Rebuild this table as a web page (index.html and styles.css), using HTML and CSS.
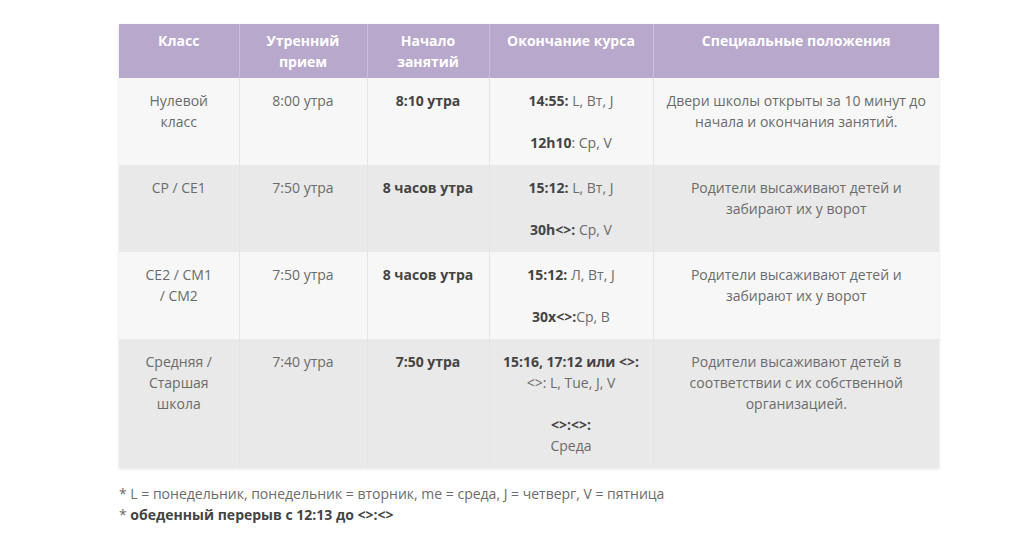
FILE: index.html
```html
<!DOCTYPE html>
<html lang="ru">
<head>
<meta charset="utf-8">
<title>Расписание</title>
<link rel="stylesheet" href="styles.css">
</head>
<body>
<div class="wrap">
  <table class="schedule">
    <colgroup>
      <col class="c1"><col class="c2"><col class="c3"><col class="c4"><col class="c5">
    </colgroup>
    <thead>
      <tr>
        <th>Класс</th>
        <th>Утренний прием</th>
        <th>Начало занятий</th>
        <th>Окончание курса</th>
        <th>Специальные положения</th>
      </tr>
    </thead>
    <tbody>
      <tr>
        <td class="cls">Нулевой класс</td>
        <td>8:00 утра</td>
        <td><b>8:10 утра</b></td>
        <td><b>14:55:</b> L, Вт, J<br><br><b>12h10</b>: Ср, V</td>
        <td>Двери школы открыты за 10 минут до начала и окончания занятий.</td>
      </tr>
      <tr>
        <td class="cls">CP / CE1</td>
        <td>7:50 утра</td>
        <td><b>8 часов утра</b></td>
        <td><b>15:12:</b> L, Вт, J<br><br><b>30h&lt;&gt;:</b> Ср, V</td>
        <td>Родители высаживают детей и забирают их у ворот</td>
      </tr>
      <tr>
        <td class="cls">CE2 / CM1<br>/ CM2</td>
        <td>7:50 утра</td>
        <td><b>8 часов утра</b></td>
        <td><b>15:12:</b> Л, Вт, J<br><br><b>30x&lt;&gt;:</b>Ср, В</td>
        <td>Родители высаживают детей и забирают их у ворот</td>
      </tr>
      <tr>
        <td class="cls">Средняя /<br>Старшая<br>школа</td>
        <td>7:40 утра</td>
        <td><b>7:50 утра</b></td>
        <td><b>15:16, 17:12 или &lt;&gt;:</b><br>&lt;&gt;: L, Tue, J, V<br><br><b>&lt;&gt;:&lt;&gt;:</b><br>Среда</td>
        <td>Родители высаживают детей в соответствии с их собственной организацией.</td>
      </tr>
    </tbody>
  </table>
  <p class="note">* L = понедельник, понедельник = вторник, me = среда, J = четверг, V = пятница</p>
  <p class="note">* <b>обеденный перерыв с 12:13 до &lt;&gt;:&lt;&gt;</b></p>
</div>
</body>
</html>
```

FILE: styles.css
```css
html, body {
  margin: 0;
  padding: 0;
  background: #fff;
}
body {
  font-family: "Open Sans", "Liberation Sans", sans-serif;
  font-size: 14px;
  line-height: 21px;
  color: #6b6b6b;
}
.wrap {
  width: 820px;
  padding: 24px 0 0 119px;
}
.schedule {
  width: 820px;
  border-collapse: collapse;
  table-layout: fixed;
  box-shadow: 0 1px 3px rgba(0, 0, 0, 0.12);
}
.c1 { width: 120px; }
.c2 { width: 128px; }
.c3 { width: 122px; }
.c4 { width: 164px; }
.c5 { width: 286px; }
.schedule th {
  background: #b8a8cc;
  color: #fff;
  font-weight: 700;
  padding: 6px 15px;
  vertical-align: top;
  text-align: center;
  border-right: 1px solid #cabfd9;
}
.schedule td {
  padding: 12px 10px 12px;
  vertical-align: top;
  text-align: center;
  border-right: 1px solid #e4e4e4;
}
.schedule th:last-child,
.schedule td:last-child {
  border-right: none;
}
.schedule tbody tr:nth-child(odd) td {
  background: #f7f7f7;
}
.schedule tbody tr:nth-child(even) td {
  background: #e9e9e9;
  border-right-color: #e5e5e5;
}
.schedule td.cls {
  padding-left: 20px;
  padding-right: 20px;
}
.schedule b {
  color: #444;
  font-weight: 700;
}
.note {
  margin: 0;
}
.note:first-of-type {
  margin-top: 15px;
}
.note b {
  color: #444;
}
```
